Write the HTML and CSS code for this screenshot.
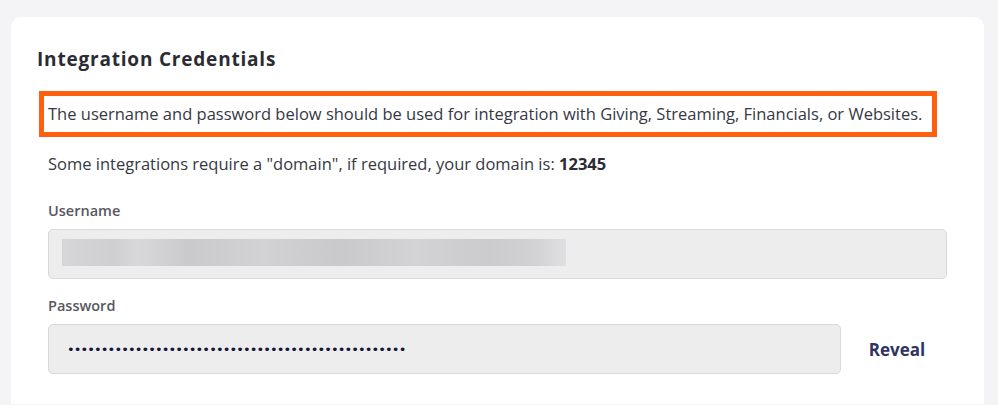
FILE: index.html
```html
<!DOCTYPE html>
<html lang="en">
<head>
<meta charset="utf-8">
<title>Integration Credentials</title>
<link rel="stylesheet" href="styles.css">
</head>
<body>
<div class="card">
  <h2 class="title">Integration Credentials</h2>
  <div class="content">
    <p class="note">The username and password below should be used for integration with Giving, Streaming, Financials, or Websites.</p>
    <p class="domain">Some integrations require a "domain", if required, your domain is: <strong>12345</strong></p>
    <div class="field">
      <div class="label">Username</div>
      <div class="input"><div class="blur"></div></div>
    </div>
    <div class="field">
      <div class="label">Password</div>
      <div class="pw-row">
        <div class="input pw"><span class="dots">••••••••••••••••••••••••••••••••••••••••••••••••••</span></div>
        <button class="reveal" type="button">Reveal</button>
      </div>
    </div>
  </div>
</div>
</body>
</html>
```

FILE: styles.css
```css
* { box-sizing: border-box; }
html, body { margin: 0; }
body {
  background: #f4f4f6;
  padding: 17px 14px 0 11px;
  font-family: "Open Sans", "Liberation Sans", sans-serif;
  color: #363944;
  height: 405px;
  overflow: hidden;
}
.card {
  background: #ffffff;
  border-radius: 10px 10px 0 0;
  padding: 30px 37px 30px 26px;
}
.title {
  margin: 0;
  font-size: 19px;
  line-height: 24px;
  font-weight: 700;
  letter-spacing: 0.8px;
  color: #2b2b33;
}
.content {
  padding-left: 11px;
}
.note {
  margin: 20px 10px 0 -9px;
  border: 5px solid #ff5f0e;
  padding: 8px 4px;
  font-size: 16.5px;
  line-height: 20px;
  white-space: nowrap;
}
.domain {
  margin: 17px 0 0 0;
  font-size: 16.5px;
  line-height: 20px;
}
.domain strong { font-weight: 700; color: #2b2b33; }
.field { margin-top: 28px; }
.field + .field { margin-top: 18px; }
.label {
  font-size: 14.5px;
  line-height: 18px;
  font-weight: 600;
  color: #575761;
  margin-bottom: 9px;
}
.input {
  height: 50px;
  background: #ededed;
  border: 1px solid #d9d9dc;
  border-radius: 5px;
  padding: 9px 13px;
}
.blur {
  width: 504px;
  height: 27px;
  background: linear-gradient(90deg, #d6d6d9 0%, #cfcfd2 10%, #d8d8da 15%, #cacacd 25%, #d2d2d5 40%, #c9c9cc 55%, #d3d3d6 70%, #cbcbce 85%, #d2d2d4 94%, #e0e0e2 100%);
}
.pw-row {
  display: flex;
  align-items: center;
}
.pw {
  flex: 1;
  display: flex;
  align-items: center;
  padding: 0 0 0 18px;
}
.dots {
  font-family: "DejaVu Sans", sans-serif;
  font-size: 13px;
  letter-spacing: -0.9px;
  color: #14163a;
  line-height: 1;
}
.reveal {
  width: 106px;
  border: 0;
  background: transparent;
  padding: 0 0 0 6px;
  font-family: "Open Sans", "Liberation Sans", sans-serif;
  font-size: 17px;
  font-weight: 700;
  color: #2f3363;
  text-align: center;
  cursor: pointer;
}
```
